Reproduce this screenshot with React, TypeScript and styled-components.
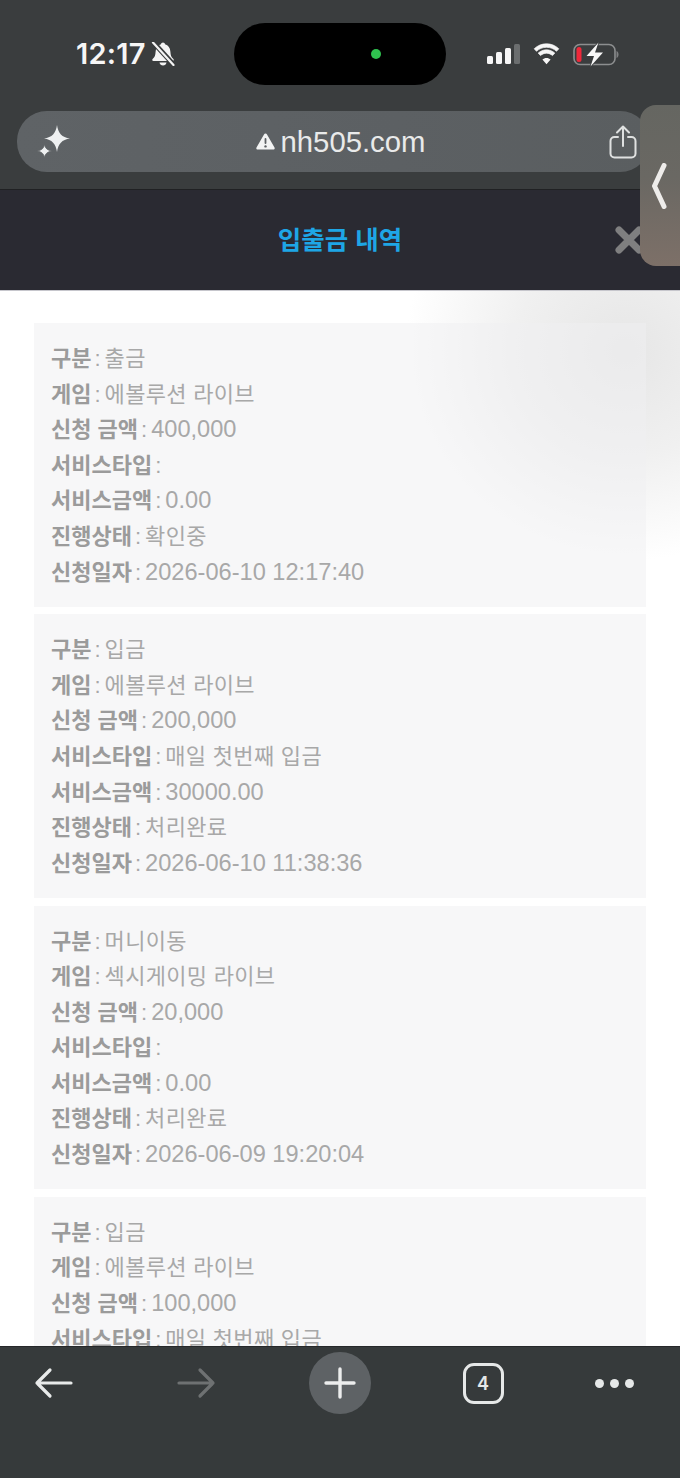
import React from "react";
import styled, { createGlobalStyle } from "styled-components";

const Global = createGlobalStyle`
  html, body { margin: 0; padding: 0; background: #fff; }
  * { box-sizing: border-box; }
`;

const KR = `"Liberation Sans", "Noto Sans CJK KR", sans-serif`;

const Screen = styled.div`
  width: 680px;
  height: 1478px;
  position: relative;
  overflow: hidden;
  display: flex;
  flex-direction: column;
  font-family: ${KR};
`;

const Chrome = styled.header`
  height: 190px;
  flex: none;
  background: #3a3d3e;
  border-bottom: 1px solid #202123;
  padding: 23px 30px 0 17px;
  display: flex;
  flex-direction: column;
  gap: 26px;
`;

const StatusBar = styled.div`
  height: 62px;
  display: grid;
  grid-template-columns: 217px 212px 1fr;
  align-items: center;
`;

const TimeGroup = styled.div`
  display: flex;
  align-items: center;
  gap: 5px;
  padding-left: 59px;
`;

const Time = styled.span`
  color: #f6f6f6;
  font-family: Inter, sans-serif;
  font-size: 29px;
  font-weight: 600;
  letter-spacing: 0.2px;
  line-height: 62px;
`;

const Island = styled.div`
  height: 62px;
  border-radius: 31px;
  background: #000;
  display: flex;
  align-items: center;
  padding-left: 137px;
`;

const CameraDot = styled.span`
  width: 10px;
  height: 10px;
  border-radius: 50%;
  background: #2fc24f;
`;

const StatusIcons = styled.div`
  display: flex;
  align-items: center;
  padding-left: 41px;
  gap: 12px;
`;

const UrlBar = styled.div`
  width: 633px;
  height: 61px;
  border-radius: 30px;
  background: linear-gradient(90deg, #5f6366 0%, #5c6063 60%, #5a5e60 100%);
  display: flex;
  align-items: center;
  padding: 0 13px 0 20px;
  position: relative;
`;

const Address = styled.div`
  flex: 1;
  display: flex;
  align-items: center;
  justify-content: center;
  gap: 6px;
  margin-left: 1px;
  color: #e9eaea;
  font-size: 29.3px;
  line-height: 61px;
`;

const TitleBar = styled.div`
  height: 100px;
  flex: none;
  background: #2a2a32;
  display: flex;
  align-items: center;
  justify-content: center;
  position: relative;
`;

const Title = styled.h1`
  margin: 0;
  color: #1ea6e6;
  font-size: 25.5px;
  font-weight: 700;
  line-height: 100px;
`;

const Close = styled.span`
  position: absolute;
  left: 615px;
  top: 36px;
  display: flex;
`;

const Handle = styled.div`
  position: absolute;
  left: 640px;
  top: 105px;
  width: 40px;
  height: 161px;
  border-radius: 16px 0 0 16px;
  background: linear-gradient(180deg, #656661 0%, #6a6863 45%, #7d7068 100%);
  display: flex;
  align-items: center;
  padding-left: 11px;
`;

const Content = styled.main`
  flex: 1;
  min-height: 0;
  overflow: hidden;
  padding: 32px 34px 0;
  border-top: 1px solid #c6c6cc;
  display: flex;
  flex-direction: column;
  gap: 7.5px;
  background:
    radial-gradient(ellipse 220px 210px at 625px 60px, #e6e6e6 0%, #f0f0f0 50%, rgba(255, 255, 255, 0) 100%),
    #fff;
`;

const Card = styled.section`
  flex: none;
  padding: 18px 17px 16.6px;
  background: rgba(240, 240, 241, 0.5);
`;

const Row = styled.div`
  height: 35.6px;
  line-height: 35.6px;
  white-space: nowrap;
  font-size: 22px;
  color: #a8a8a8;
`;

const Label = styled.b`
  font-weight: 700;
  color: #9b9b9b;
`;

const Colon = styled.span`
  margin: 0 4px 0 3px;
  color: #a8a8a8;
`;

const Value = styled.span<{ $num?: boolean }>`
  font-size: ${(p) => (p.$num ? "23.6px" : "22px")};
  letter-spacing: ${(p) => (p.$num ? "0" : "0.3px")};
`;

const BottomBar = styled.nav`
  height: 132px;
  flex: none;
  background: #363a3b;
  border-top: 1px solid #26282a;
  padding: 5px 0 0 0;
  display: grid;
  grid-template-columns: 107px 180px 106px 180px 82px 25px;
  align-items: start;
  justify-items: center;
`;

const NavCell = styled.div`
  height: 62px;
  display: flex;
  align-items: center;
  justify-content: center;
`;

const PlusCircle = styled.div`
  width: 62px;
  height: 62px;
  border-radius: 50%;
  background: #5e6265;
  display: flex;
  align-items: center;
  justify-content: center;
`;

const TabCount = styled.div`
  width: 41px;
  height: 41px;
  border: 3px solid #e6e8e8;
  border-radius: 11px;
  color: #e6e8e8;
  font-family: Inter, sans-serif;
  font-size: 18px;
  font-weight: 600;
  display: flex;
  align-items: center;
  justify-content: center;
`;

const Dots = styled.div`
  display: flex;
  gap: 6px;
`;

const Dot = styled.span`
  width: 9px;
  height: 9px;
  border-radius: 50%;
  background: #e6e8e8;
`;

type Item = { label: string; value: string; num?: boolean };

const rec = (kind: string, game: string, amount: string, type: string, bonus: string, state: string, date: string): Item[] => [
  { label: "구분", value: kind },
  { label: "게임", value: game },
  { label: "신청 금액", value: amount, num: true },
  { label: "서비스타입", value: type },
  { label: "서비스금액", value: bonus, num: true },
  { label: "진행상태", value: state },
  { label: "신청일자", value: date, num: true },
];

const records: Item[][] = [
  rec("출금", "에볼루션 라이브", "400,000", "", "0.00", "확인중", "2026-06-10 12:17:40"),
  rec("입금", "에볼루션 라이브", "200,000", "매일 첫번째 입금", "30000.00", "처리완료", "2026-06-10 11:38:36"),
  rec("머니이동", "섹시게이밍 라이브", "20,000", "", "0.00", "처리완료", "2026-06-09 19:20:04"),
  rec("입금", "에볼루션 라이브", "100,000", "매일 첫번째 입금", "", "", "").slice(0, 4),
];

export default function App() {
  return (
    <Screen>
      <Global />
      <Chrome>
        <StatusBar>
          <TimeGroup>
            <Time>12:17</Time>
            <svg width="24" height="24" viewBox="0 0 24 24">
              <path d="M12 0.500c1.100 0 1.900.8 2 1.800 3.400.9 5.200 3.700 5.400 7.400.2 3.300.7 5.300 3 7.300.8.800.3 2-.8 2H2.400c-1.100 0-1.600-1.200-.8-2 2.300-2 2.800-4 3-7.300.2-3.700 2-6.500 5.400-7.400.1-1 .9-1.800 2-1.800z" fill="#f4f4f4" />
              <path d="M8.500 20.500h7c-.3 1.900-1.700 3-3.500 3s-3.200-1.100-3.500-3z" fill="#f4f4f4" />
              <path d="M2 0l21 23" stroke="#3a3d3e" strokeWidth="5" />
              <path d="M2 0.500l20.500 22.500" stroke="#f4f4f4" strokeWidth="2.200" strokeLinecap="round" />
            </svg>
          </TimeGroup>
          <Island>
            <CameraDot />
          </Island>
          <StatusIcons>
            <svg width="33" height="22" viewBox="0 0 33 22">
              <rect x="0" y="13" width="6" height="8" rx="1.500" fill="#f6f6f6" />
              <rect x="9" y="9" width="6" height="12" rx="1.500" fill="#f6f6f6" />
              <rect x="18" y="5" width="6" height="16" rx="1.500" fill="#f6f6f6" />
              <rect x="27" y="1" width="6" height="20" rx="1.500" fill="#6b6e6f" />
            </svg>
            <svg width="29" height="22" viewBox="0 0 29 22">
              <path d="M14.500 4.300c3.900 0 7.400 1.500 10 4l2.300-2.500C23.600 2.700 19.300.800 14.500.800S5.400 2.700 2.200 5.800l2.300 2.500c2.600-2.500 6.100-4 10-4z" fill="#f6f6f6" stroke="#f6f6f6" strokeWidth="0.700" />
              <path d="M14.500 10.200c2.300 0 4.400.9 6 2.400l2.300-2.500c-2.200-2-5.100-3.300-8.300-3.300S8.400 8.100 6.200 10.100l2.300 2.500c1.600-1.500 3.700-2.400 6-2.400z" fill="#f6f6f6" stroke="#f6f6f6" strokeWidth="0.700" />
              <path d="M14.500 15c-1.600 0-3 .6-4.100 1.600l4.100 4.700 4.100-4.700c-1.100-1-2.500-1.600-4.100-1.600z" fill="#f6f6f6" />
            </svg>
            <svg width="46" height="25" viewBox="0 0 46 25">
              <rect x="1" y="2.500" width="41" height="20" rx="6" fill="none" stroke="#8c8e8f" strokeWidth="1.600" />
              <rect x="3.500" y="5" width="5" height="15" rx="2.500" fill="#f0283a" />
              <path d="M43.500 9c1.300.4 2 1.900 2 3.500s-.7 3.100-2 3.500z" fill="#7f8182" />
              <path d="M25.500 0.500L13.500 14h7.500L17.500 24.500 30 10.500h-8z" fill="#f8f8f8" stroke="#3a3d3e" strokeWidth="1.600" strokeLinejoin="round" paintOrder="stroke" />
            </svg>
          </StatusIcons>
        </StatusBar>
        <UrlBar>
          <svg width="34" height="34" viewBox="0 0 34 34">
            <path d="M20 0c1 8 5 12.500 13 13.500-8 1-12 5.500-13 13.500-1-8-5-12.500-13-13.500 8-1 12-5.500 13-13.500z" fill="#eef0f1" />
            <path d="M7.500 19c.5 4 2.500 6 7 7-4.500 1-6.500 3-7 7-.5-4-2.500-6-7-7 4.500-1 6.500-3 7-7z" fill="#eef0f1" stroke="#5f6366" strokeWidth="0.800" />
          </svg>
          <Address>
            <svg width="19" height="17" viewBox="0 0 19 17">
              <path d="M9.500 0.500c.7 0 1.200.4 1.500.9l7.500 13c.6 1-.1 2.100-1.200 2.100H1.700c-1.100 0-1.800-1.100-1.200-2.100l7.500-13c.3-.5.800-.9 1.500-.9z" fill="#f2f3f3" />
              <rect x="8.600" y="5" width="1.800" height="6" rx="0.900" fill="#5c6063" />
              <circle cx="9.500" cy="13.400" r="1.200" fill="#5c6063" />
            </svg>
            nh505.com
          </Address>
          <svg width="28" height="34" viewBox="0 0 28 34">
            <path d="M9 12H5.500A4 4 0 0 0 1.500 16v12.500a4 4 0 0 0 4 4h17a4 4 0 0 0 4-4V16a4 4 0 0 0-4-4H19" fill="none" stroke="#dfe1e1" strokeWidth="2" strokeLinecap="round" />
            <path d="M14 21V2M8 7.500L14 1.500l6 6" fill="none" stroke="#dfe1e1" strokeWidth="2" strokeLinecap="round" strokeLinejoin="round" />
          </svg>
        </UrlBar>
      </Chrome>
      <TitleBar>
        <Title>입출금 내역</Title>
        <Close>
          <svg width="28" height="28" viewBox="0 0 28 28">
            <path d="M4 4l20 20M24 4L4 24" stroke="#7f7f80" strokeWidth="7" strokeLinecap="round" />
          </svg>
        </Close>
      </TitleBar>
      <Content>
        {records.map((items, i) => (
          <Card key={i}>
            {items.map((f) => (
              <Row key={f.label}>
                <Label>{f.label}</Label>
                <Colon>:</Colon>
                <Value $num={f.num}>{f.value}</Value>
              </Row>
            ))}
          </Card>
        ))}
      </Content>
      <BottomBar>
        <NavCell>
          <svg width="40" height="32" viewBox="0 0 40 32">
            <path d="M37 16H3M16 3L3 16l13 13" fill="none" stroke="#e8eaea" strokeWidth="3.200" strokeLinecap="round" strokeLinejoin="round" />
          </svg>
        </NavCell>
        <NavCell>
          <svg width="40" height="32" viewBox="0 0 40 32">
            <path d="M2 16h34M23 3l13 13-13 13" fill="none" stroke="#6e7172" strokeWidth="3.200" strokeLinecap="round" strokeLinejoin="round" />
          </svg>
        </NavCell>
        <PlusCircle>
          <svg width="32" height="32" viewBox="0 0 32 32">
            <path d="M16 2v28M2 16h28" stroke="#eceded" strokeWidth="3.400" strokeLinecap="round" />
          </svg>
        </PlusCircle>
        <NavCell>
          <TabCount>4</TabCount>
        </NavCell>
        <NavCell>
          <Dots>
            <Dot />
            <Dot />
            <Dot />
          </Dots>
        </NavCell>
      </BottomBar>
      <Handle>
        <svg width="16" height="46" viewBox="0 0 16 46">
          <path d="M13 2.500L3.500 23 13 43.500" fill="none" stroke="#eeecea" strokeWidth="5" strokeLinecap="round" strokeLinejoin="round" />
        </svg>
      </Handle>
    </Screen>
  );
}
